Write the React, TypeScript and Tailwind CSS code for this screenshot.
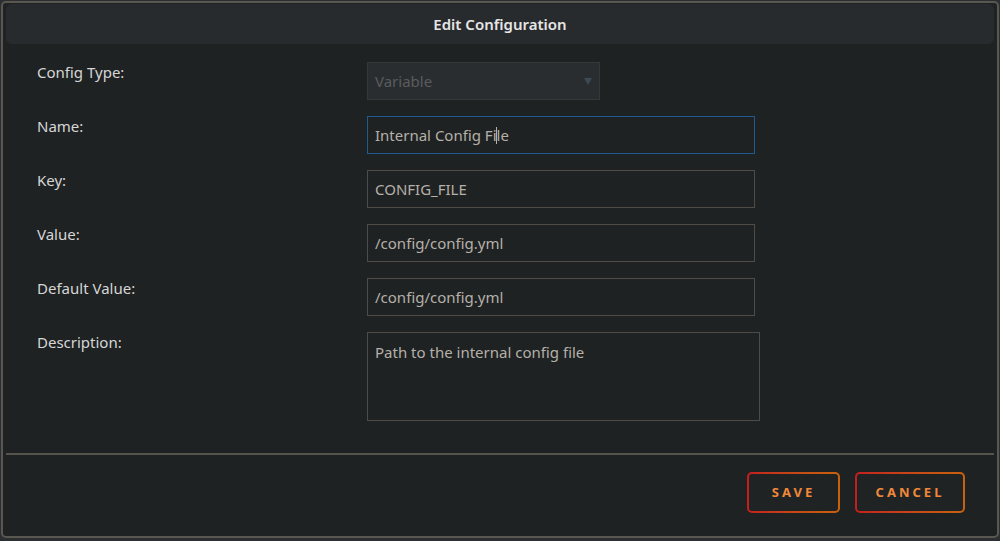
import React from "react";

const font = { fontFamily: '"Noto Sans", "Open Sans", sans-serif' };

function Row({ label, children }: { label: string; children: React.ReactNode }) {
  return (
    <div className="flex items-start">
      <div className="w-[330px] text-[15px] leading-[20px] text-[#d6d6d6]">{label}</div>
      {children}
    </div>
  );
}

function Field({ value, focused, caretAfter }: { value: string; focused?: boolean; caretAfter?: number }) {
  return (
    <div
      className={`flex h-[38px] w-[388px] items-center border px-[7px] text-[15px] text-[#b5b0a9] ${
        focused ? "border-[#1f5a8f]" : "border-[#4f4b46]"
      }`}
    >
      {caretAfter !== undefined ? (
        <>
          <span>{value.slice(0, caretAfter)}</span>
          <span className="mx-[-0.5px] inline-block h-[17px] w-[1px] bg-[#b5b0a9]" />
          <span>{value.slice(caretAfter)}</span>
        </>
      ) : (
        <span>{value}</span>
      )}
    </div>
  );
}

function GradButton({ label, w }: { label: string; w: string }) {
  return (
    <div className={`rounded-[5px] bg-gradient-to-r from-[#c41d1d] to-[#c8620c] p-[2px] ${w}`}>
      <div className="flex h-[37px] items-center justify-center rounded-[3px] bg-[#202324] text-[13px] font-bold tracking-[3px] text-[#f0883a]">
        {label}
      </div>
    </div>
  );
}

export default function App() {
  return (
    <div className="h-[541px] w-[1000px] bg-[#2c2f31] p-[1px]" style={font}>
      <div className="flex h-[537px] w-[998px] flex-col rounded-[5px] border-2 border-[#5a5650] bg-[#1f2223] px-[3px] pt-[1px]">
        <div className="flex h-[40px] items-center justify-center rounded-[6px] bg-[#282b2e] text-[15px] font-semibold text-[#e6e6e6]">
          Edit Configuration
        </div>
        <div className="flex flex-col gap-[16px] pl-[31px] pr-[32px] pt-[18px]">
          <Row label="Config Type:">
            <div className="flex h-[38px] w-[233px] items-center justify-between border border-[#35383b] bg-[#2a2d30] pl-[7px] pr-[7px] text-[15px] text-[#5a5c5d]">
              <span>Variable</span>
              <svg width="8" height="7" viewBox="0 0 8 7">
                <polygon points="0,0 8,0 4,7" fill="#3e4954" />
              </svg>
            </div>
          </Row>
          <Row label="Name:">
            <Field value="Internal Config File" focused caretAfter={18} />
          </Row>
          <Row label="Key:">
            <Field value="CONFIG_FILE" />
          </Row>
          <Row label="Value:">
            <Field value="/config/config.yml" />
          </Row>
          <Row label="Default Value:">
            <Field value="/config/config.yml" />
          </Row>
          <Row label="Description:">
            <div className="h-[89px] w-[393px] border border-[#4f4b46] px-[7px] pt-[8px] text-[15px] text-[#b5b0a9]">
              Path to the internal config file
            </div>
          </Row>
        </div>
        <div className="mt-[32px] h-[2px] bg-[#56524c]" />
        <div className="flex justify-end gap-[15px] pr-[29px] pt-[17px]">
          <GradButton label="SAVE" w="w-[93px]" />
          <GradButton label="CANCEL" w="w-[110px]" />
        </div>
      </div>
    </div>
  );
}
